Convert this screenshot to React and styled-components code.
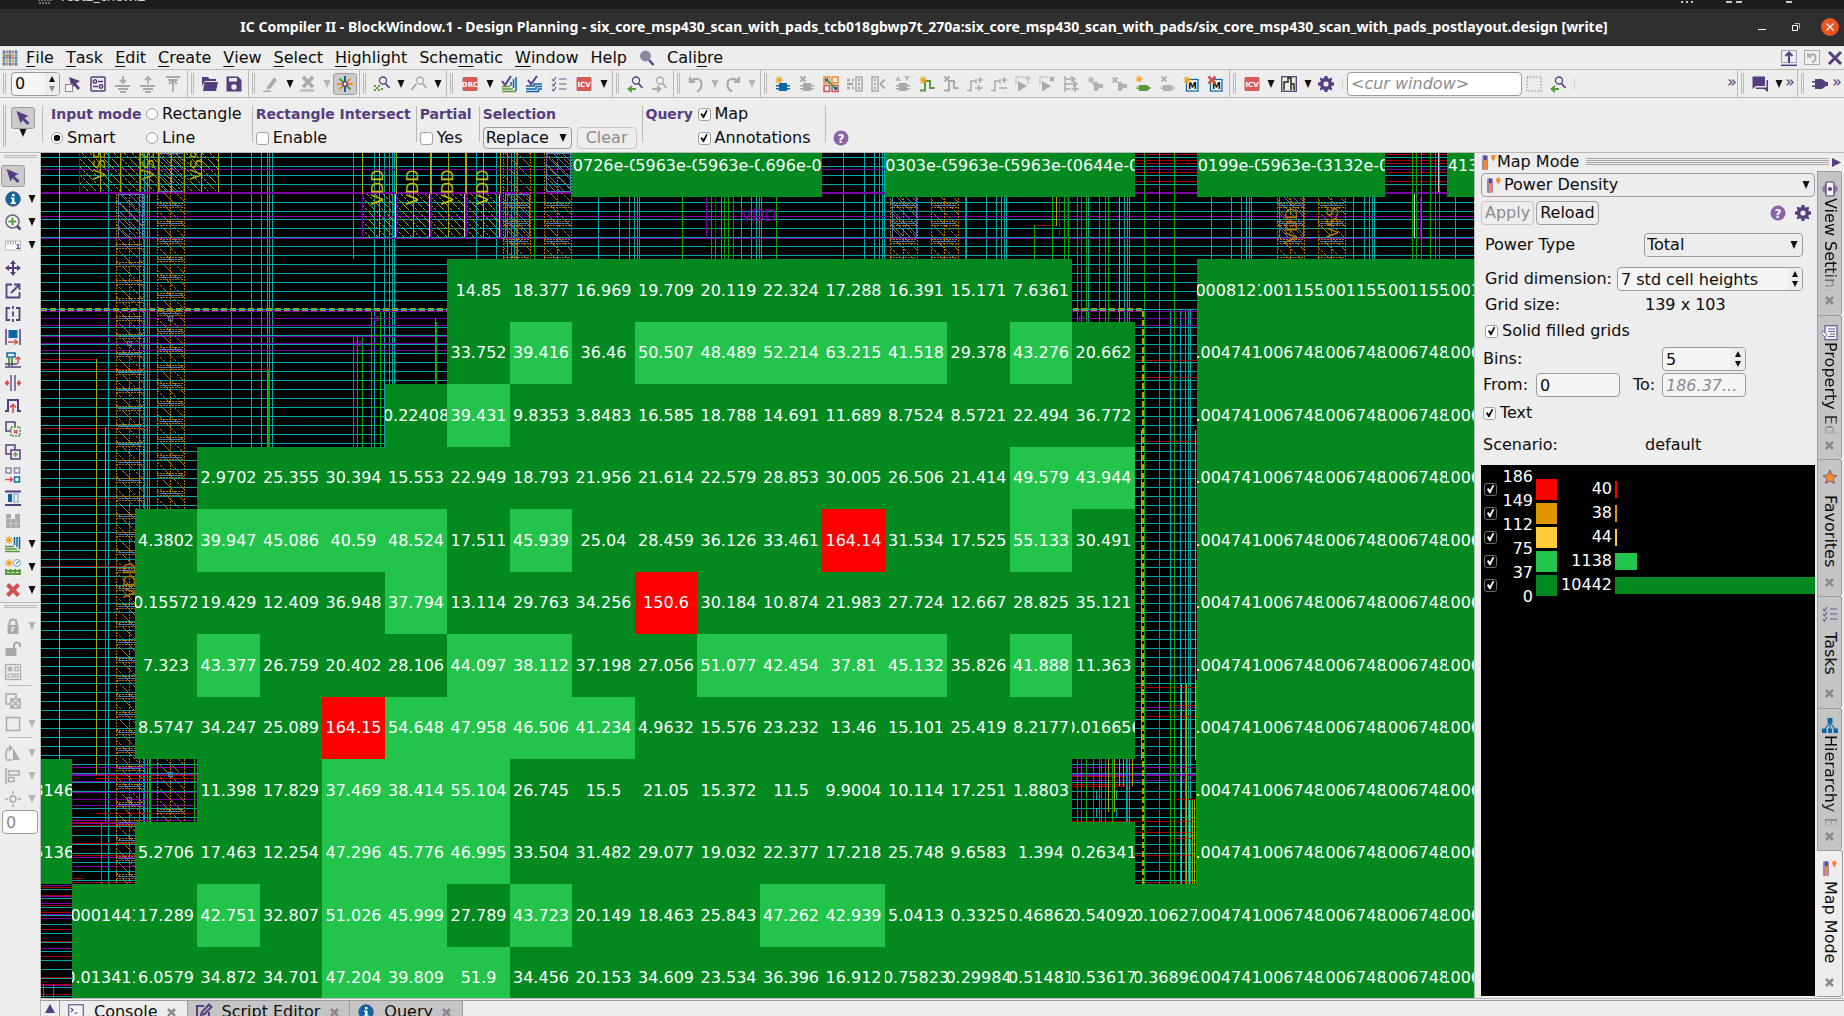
import React, { useState } from "react";
import styled, { createGlobalStyle, css } from "styled-components";

const C = {
  panel: "#ededed",
  line: "#b9b9b9",
  frame: "#9c9c9c",
  violet: "#553e80",
  blue: "#0b67a4",
  leaf: "#5a9a3a",
  orange: "#f58a2e",
  sun: "#f5a11e",
  rose: "#d2504f",
  grey: "#a9a9a9",
  text: "#0c0c0c",
  mute: "#8c8c8c",
};

const BINS = [
  { min: 149, label: "186", count: 40, color: "#ff0000" },
  { min: 112, label: "149", count: 38, color: "#e09600" },
  { min: 75, label: "112", count: 44, color: "#ffcc38" },
  { min: 37.3, label: "75", count: 1138, color: "#22c44b" },
  { min: 0, label: "37", count: 10442, color: "#028a20" },
];

const Global = createGlobalStyle`
  *, *::before, *::after { box-sizing: border-box; }
  body { margin: 0; overflow: hidden; background: ${C.panel}; }
  body, button, input, select {
    font-family: "DejaVu Sans", sans-serif;
    font-size: 16px;
    line-height: 20px;
    color: ${C.text};
  }
  button, input, select { margin: 0; }
`;

/* ---------- icons ---------- */

const Svg = styled.svg`
  display: block;
  flex: none;
  overflow: visible;
`;

const Star = ({ x = 3, y = 3, c = C.sun, r = 3 }) => (
  <g stroke={c} strokeWidth="1">
    <circle cx={x} cy={y} r={r * 0.5} fill={c} stroke="none" />
    <path
      d={`M${x} ${y - r}V${y + r}M${x - r} ${y}H${x + r}M${x - r * 0.75} ${y - r * 0.75}L${x + r * 0.75} ${y + r * 0.75}M${x + r * 0.75} ${y - r * 0.75}L${x - r * 0.75} ${y + r * 0.75}`}
    />
  </g>
);
const Cross = ({ x = 3, y = 3, r = 2.5, c = C.grey, w = 2 }) => (
  <path d={`M${x - r} ${y - r}L${x + r} ${y + r}M${x + r} ${y - r}L${x - r} ${y + r}`} stroke={c} strokeWidth={w} />
);
const gate = (c) => <path d="M4 8H12L15 10.500H16V11.500H15L12 14H4V12H1.500V11H4V10.500H1.500V9.500H4Z" fill={c} />;
const cell = (c) => (
  <path d="M4 7H12V9H15V10.500H12V12H15V13.500H12V15H4V13.500H1V12H4V10.500H1V9H4Z" fill={c} />
);
const route = (c) => <path d="M1 14.500H6V5H11V12H15.500" fill="none" stroke={c} strokeWidth="2" />;
const thinRoute = (c) => <path d="M0 14.500H4V5H9M9 2.500V7.500M13 1V7M11 4H16" fill="none" stroke={c} strokeWidth="1.500" />;
const badge = (t) => (
  <>
    <rect x="0.500" y="1" width="15" height="14" rx="1.500" fill="#d65a58" />
    <text x="8" y="11" textAnchor="middle" fontSize="7" fontWeight="700" fill="#fff" fontFamily="DejaVu Sans, sans-serif">
      {t}
    </text>
  </>
);
const glass = (c) => (
  <g fill="none" stroke={c}>
    <circle cx="8" cy="4.500" r="3.500" strokeWidth="1.300" />
    <path d="M10.500 7.500L14.500 12" strokeWidth="1.800" />
  </g>
);
const bigM = (
  <>
    <rect x="3.500" y="3.500" width="11.500" height="11.500" fill="#fff" stroke={C.blue} strokeWidth="1.300" />
    <text x="9.500" y="13" textAnchor="middle" fontSize="9" fontWeight="700" fill="#111" fontFamily="DejaVu Sans, sans-serif">
      M
    </text>
  </>
);
const bars = (c) => <path d="M0 10H15M3 13H13M5 16H11" fill="none" stroke={c} strokeWidth="2" />;
const gearPath =
  "M6.600 0H9.400L9.800 2.200L11.300 2.800L13.100 1.600L14.400 2.900L13.200 4.700L13.800 6.200L16 6.600V9.400L13.800 9.800L13.200 11.300L14.400 13.100L13.100 14.400L11.300 13.200L9.800 13.800L9.400 16H6.600L6.200 13.800L4.700 13.200L2.900 14.400L1.600 13.100L2.800 11.300L2.200 9.800L0 9.400V6.600L2.200 6.200L2.800 4.700L1.600 2.900L2.900 1.600L4.700 2.800L6.200 2.200Z";

const ICONS = {
  cursor: <path d="M1.500 1L13.500 6L9.500 8L14.500 13L12.500 15L7.500 10L5.500 13.500Z" fill={C.violet} />,
  pick: (
    <>
      <path d="M4 1L15 5L11 7.500L15 12L13 14L9 9.500L7 13Z" fill={C.violet} />
      <rect x="0.500" y="8.500" width="7" height="7" fill="#f6f6f6" stroke="#888" />
    </>
  ),
  sliders: (
    <g fill="none" stroke={C.violet} strokeWidth="1.500">
      <rect x="1" y="1" width="14" height="14" rx="1" />
      <circle cx="5" cy="5.500" r="1.700" />
      <circle cx="11" cy="10.500" r="1.700" />
      <path d="M8 5.500H13M3 10.500H8" />
    </g>
  ),
  down: (
    <>
      {bars(C.grey)}
      <path d="M8 0V6M5 4L8 7L11 4" fill="none" stroke={C.grey} strokeWidth="1.800" />
    </>
  ),
  up: (
    <>
      {bars(C.grey)}
      <path d="M8 8V1M5 4L8 1L11 4" fill="none" stroke={C.grey} strokeWidth="1.800" />
    </>
  ),
  top: <path d="M1 1H15M8 16V4M4 8L8 4L12 8M3 4H13" fill="none" stroke={C.grey} strokeWidth="1.800" />,
  folder: (
    <g fill={C.violet}>
      <path d="M0 1H6L7.500 3H14V5H3L0 10Z" />
      <path d="M2.500 6H16L14 15H1Z" />
    </g>
  ),
  save: (
    <g>
      <path d="M0.500 0.500H12L15.500 4V15.500H0.500Z" fill={C.violet} />
      <rect x="3" y="2" width="8" height="3.500" fill="#ededed" />
      <circle cx="8" cy="11" r="2.700" fill="#ededed" />
    </g>
  ),
  pencil: <path d="M4 11L11 1.500L14 4L7.500 12.500L3.500 13.500ZM0 14.500H8V16H0Z" fill={C.grey} />,
  erase: (
    <>
      <path d="M0 13H14V16H0Z" fill="#c4c4c4" />
      <Cross x={8} y={6} r={5} w={3.500} />
    </>
  ),
  burst: (
    <>
      <g strokeWidth="2" fill="none">
        <path d="M8 0V5M8 11V16" stroke={C.blue} />
        <path d="M0 8H5M11 8H16" stroke={C.orange} />
        <path d="M2.500 2.500L6 6M10 10L13.500 13.500" stroke={C.leaf} />
        <path d="M13.500 2.500L10 6M6 10L2.500 13.500" stroke={C.orange} />
      </g>
      <circle cx="8" cy="8" r="2.200" fill="#fff" stroke={C.violet} strokeWidth="1.500" />
    </>
  ),
  findSel: (
    <>
      <g transform="translate(1 0)">{glass(C.violet)}</g>
      <path
        d="M0 9h2v2h-2zM4 9h2v2h-2zM2 11h2v2h-2zM0 13h2v2h-2zM4 13h2v2h-2zM7 12h2v2h-2z"
        fill={C.leaf}
      />
    </>
  ),
  findOff: (
    <>
      <g transform="translate(1 0)">{glass(C.grey)}</g>
      <path d="M5 8L0.500 14" stroke={C.grey} strokeWidth="2" />
    </>
  ),
  drc: badge("DRC"),
  icv: badge("ICV"),
  checkAll: (
    <g fill="none" strokeWidth="1.500">
      <path d="M1 5L4 9L10 0" stroke={C.violet} strokeWidth="2" />
      <path d="M10 6V10M12.500 3V12M15 1V15" stroke={C.blue} />
      <path d="M1 10.500H9M1 13H12M1 15.500H15" stroke={C.leaf} />
    </g>
  ),
  checkRoute: (
    <g fill="none" strokeWidth="1.500">
      <path d="M2 4L5 8L11 0" stroke={C.violet} strokeWidth="2" />
      <path d="M0 10H8V8H16M0 13H10V10.500H16M0 15.500H12.500V13H16" stroke={C.blue} />
    </g>
  ),
  tasks: (
    <path
      d="M1 3L2.500 5L5 1M1 8L2.500 10L5 6M1 13L2.500 15L5 11M8 3H15.500M8 8H15.500M8 13H15.500"
      fill="none"
      stroke="#6a568f"
      strokeWidth="1.200"
    />
  ),
  prev: (
    <>
      <g transform="translate(1 0)">{glass(C.violet)}</g>
      <path d="M9 13H2M5 10L1.500 13L5 16" fill="none" stroke={C.leaf} strokeWidth="1.800" />
    </>
  ),
  next: (
    <>
      <g transform="translate(1 0)">{glass(C.grey)}</g>
      <path d="M1 13H9M6 10L9.500 13L6 16" fill="none" stroke={C.grey} strokeWidth="1.800" />
    </>
  ),
  undo: <path d="M2 1V6H7M2 6C6 1 14 2 13.500 9C13.500 12 12 14 9 15.500" fill="none" stroke={C.grey} strokeWidth="2.200" />,
  redo: <path d="M14 1V6H9M14 6C10 1 2 2 2.500 9C2.500 12 4 14 7 15.500" fill="none" stroke={C.grey} strokeWidth="2.200" />,
  newCell: <>{cell(C.blue)}<Star x={4} y={4} r={4} /></>,
  delCell: <>{cell(C.grey)}<Cross x={4} y={3} /></>,
  swap: (
    <>
      <g fill="none" strokeWidth="1.500">
        <path d="M1 1H6.500V7H1ZM9 1H15V7H9Z" stroke={C.orange} />
        <path d="M1 9.500H6.500V15.500H1ZM9 9.500H15V15.500H9Z" stroke={C.rose} />
        <path d="M5 5L12 12" stroke={C.leaf} strokeWidth="2" />
      </g>
      <path d="M2 2.500h3v3h-3zM11 11h3v3h-3z" fill={C.blue} />
    </>
  ),
  chipL: (
    <g fill="none" stroke={C.grey} strokeWidth="1.500">
      <rect x="9" y="1" width="6" height="14" />
      <path d="M0 4H3M0 8H6M0 12H3M5 4H7M5 12H7M11 4H13M11 8H13M11 12H13" strokeWidth="2.500" />
    </g>
  ),
  chipR: (
    <g fill="none" stroke={C.grey} strokeWidth="1.500">
      <rect x="1" y="1" width="6" height="14" />
      <path d="M9 8L14 3.500M9 8L14 12.500M3 4H5M3 8H5M3 12H5" strokeWidth="2" />
    </g>
  ),
  updown: (
    <>
      {cell(C.grey)}
      <path d="M0 5L3 0L6 5ZM9 0H15L12 5Z" fill="#bdbdbd" />
    </>
  ),
  newRoute: <>{route(C.leaf)}<Star x={4} y={4} r={4} /></>,
  delRoute: <>{route(C.grey)}<Cross x={4} y={3} /></>,
  addPin: <>{thinRoute(C.grey)}<path d="M8 12H16M12 9V15" stroke={C.grey} strokeWidth="1.500" /></>,
  remPin: <>{thinRoute(C.grey)}<path d="M8 12H16" stroke={C.grey} strokeWidth="1.500" /></>,
  bufUp: (
    <>
      <path d="M3 5L12 10L3 15.500Z" fill={C.grey} />
      <path d="M1 9V1H13V8M10.500 3.500L13 1L15.500 3.500" fill="none" stroke="#bdbdbd" strokeWidth="1.200" />
    </>
  ),
  bufDel: (
    <>
      <path d="M3 5L12 10L3 15.500Z" fill={C.grey} />
      <path d="M1 9V1H9" fill="none" stroke="#bdbdbd" strokeWidth="1.200" />
      <Cross x={13} y={3} r={2} />
    </>
  ),
  tree: (
    <g fill="none" stroke={C.grey} strokeWidth="1.500">
      <path d="M2 0V16M2 3H8M2 8H11M2 13H8" />
      <path d="M9 1L12 3L9 5ZM12 10V16M9 13H16M11 5.500L14 8L11 10Z" />
    </g>
  ),
  newPort: <><path d="M5 6H10L12 8H16V12H12L10 15H7V11Z" fill="#b2b2b2" /><Star x={4} y={4} r={3.5} c="#b2b2b2" /></>,
  delPort: <><path d="M7 6H10L12 8H16V12H12L10 15H7Z" fill="#b2b2b2" /><Cross x={4} y={4} c="#b2b2b2" /></>,
  newGate: <><g transform="translate(0 1)">{gate(C.leaf)}</g><Star x={4} y={3} r={3.5} /></>,
  delGate: <><g transform="translate(0 1)">{gate("#b2b2b2")}</g><Cross x={5} y={3} c="#b2b2b2" /></>,
  newM: <>{bigM}<Star x={4} y={4} r={4} /></>,
  delM: <>{bigM}<Cross x={5} y={4} r={3.5} c={C.rose} w={2.5} /></>,
  signal: (
    <>
      <rect x="0.700" y="0.700" width="14.600" height="14.600" fill="#e7f0df" stroke={C.violet} strokeWidth="1.300" />
      <path d="M3 14V6H7V2H10V14M10 8H13V14" fill="none" stroke="#222" strokeWidth="1.500" />
    </>
  ),
  gear: (
    <>
      <path d={gearPath} fill={C.violet} />
      <circle cx="8" cy="8" r="2.600" fill="#ededed" />
    </>
  ),
  marquee: <rect x="1" y="1" width="14" height="14" fill="none" stroke={C.grey} strokeWidth="1.500" strokeDasharray="1.500 1.500" />,
  chat: (
    <g fill={C.violet}>
      <path d="M0.500 0.500H13V10H4L0.500 13Z" />
      <path d="M14.500 4H16V16L12 13H4V11.500H14.500Z" />
    </g>
  ),
  plug: <path d="M3 3H10L14 6H16V10H14L10 13H3V11H0V9.500H3V6.500H0V5H3Z" fill={C.violet} />,
  help: (
    <>
      <circle cx="8" cy="8" r="7.500" fill="#8a63a8" />
      <text x="8" y="12.500" textAnchor="middle" fontSize="12" fontWeight="700" fill="#fff" fontFamily="DejaVu Sans, sans-serif">
        ?
      </text>
    </>
  ),
  info: (
    <>
      <circle cx="8" cy="8" r="7.200" fill={C.blue} stroke="#4b4c80" strokeWidth="1" />
      <path d="M6 6.500H9.500V11.500H11V13H5.500V11.500H7V8H6ZM7 3H9.500V5.200H7Z" fill="#fff" />
    </>
  ),
  zoomIn: (
    <g fill="none">
      <circle cx="7.500" cy="7.500" r="6.500" stroke="#6d628a" strokeWidth="1.500" fill="#f6f6f6" />
      <path d="M12 12L15.500 15.500" stroke={C.violet} strokeWidth="2.500" />
      <path d="M7.500 3.500V11.500M3.500 7.500H11.500" stroke={C.leaf} strokeWidth="2" />
    </g>
  ),
  ruler: (
    <>
      <rect x="0.500" y="4" width="15" height="9" fill="#fff" stroke="#bbb" />
      <path d="M3 4V8M5.500 4V7M8 4V8M10.500 4V7" stroke="#999" />
      <text x="13" y="12" textAnchor="middle" fontSize="7" fontWeight="700" fill={C.violet} fontFamily="DejaVu Sans, sans-serif">
        1
      </text>
    </>
  ),
  move: (
    <g>
      <path d="M8 3V13M3 8H13" stroke={C.violet} strokeWidth="2" />
      <path d="M8 0L11 4H5ZM8 16L5 12H11ZM0 8L4 5V11ZM16 8L12 11V5Z" fill={C.violet} />
    </g>
  ),
  resize: <path d="M7 1.500H1.500V14.500H14.500V9M6 10L14 2M9 1.500H14.500V7" fill="none" stroke={C.violet} strokeWidth="1.800" />,
  split: (
    <path d="M5 2H1.500V14H5M11 2H14.500V14H11M8 0V3M8 5.500V10.500M8 13V16" fill="none" stroke={C.violet} strokeWidth="1.800" />
  ),
  spread: (
    <>
      <path d="M1 0V16M15 0V16" stroke={C.violet} strokeWidth="1.500" />
      <rect x="3.500" y="1" width="9" height="8" fill={C.blue} />
      <path d="M3 13H12M9.500 10.500L12.500 13L9.500 15.500" fill="none" stroke={C.rose} strokeWidth="1.500" />
    </>
  ),
  stack: (
    <g fill="none" strokeWidth="1.500">
      <rect x="2" y="1" width="8" height="4" stroke={C.blue} />
      <path d="M4 6V14M7 6V14" stroke={C.leaf} strokeWidth="2" />
      <path d="M0 12H12M0 15H16" stroke={C.violet} />
      <path d="M13 12V5M10.500 7.500L13 5L15.500 7.500" stroke={C.rose} />
    </g>
  ),
  squeeze: (
    <g fill="none" strokeWidth="1.800">
      <path d="M6 0V16M10 0V16" stroke="#7a6a9e" />
      <path d="M0 8H4M3 5.500L0.800 8L3 10.500M16 8H12M13 5.500L15.200 8L13 10.500" stroke={C.rose} />
    </g>
  ),
  pulse: (
    <g fill="none" strokeWidth="2">
      <path d="M0 13H3V2H13V13H16" stroke={C.violet} />
      <path d="M8 15V7M5 9.500L8 6.500L11 9.500" stroke={C.rose} strokeWidth="1.600" />
    </g>
  ),
  unGroup: (
    <g fill="none" strokeWidth="1.500">
      <rect x="1" y="1" width="9" height="9" stroke={C.violet} />
      <rect x="6" y="6" width="9" height="9" stroke={C.leaf} strokeDasharray="2 1" fill="#ededed" />
      <path d="M9 9L12.500 12.500M12.500 9L9 12.500" stroke={C.rose} />
    </g>
  ),
  copy: (
    <g fill="none" strokeWidth="1.500">
      <rect x="1" y="1" width="9" height="9" stroke={C.violet} />
      <rect x="6" y="6" width="9" height="9" stroke={C.violet} fill="#ededed" />
      <path d="M10.500 8V13M8 10.500H13" stroke={C.leaf} />
    </g>
  ),
  arrange: (
    <g fill="none" strokeWidth="1.400">
      <rect x="1" y="1" width="5" height="5" stroke="#8d7fa8" />
      <rect x="9.500" y="1" width="5" height="5" stroke="#8d7fa8" />
      <rect x="9.500" y="10" width="5" height="5" stroke={C.blue} />
      <path d="M0 12.500H7M5 10L7.500 12.500L5 15" stroke={C.rose} />
    </g>
  ),
  distribute: (
    <>
      <path d="M0 1.500H16M0 15H16" stroke={C.violet} strokeWidth="2" />
      <rect x="3" y="4" width="4" height="8" fill={C.blue} />
      <rect x="9" y="4" width="4" height="8" fill="none" stroke="#8fb8d6" strokeWidth="1.500" />
    </>
  ),
  blocks: (
    <>
      <path d="M1 1H6V6H10V1H15V15H1Z" fill={C.grey} />
      <path d="M6 6V15M11 5V15M1 5.500H6M1 10.500H15" stroke="#d6d6d6" strokeWidth="0.700" />
    </>
  ),
  newLayers: (
    <>
      <path d="M9.500 1V9M12 1V11M14.500 1V13" stroke={C.blue} strokeWidth="1.500" />
      <path d="M0 10.500H9M0 13H12M0 15.500H15" stroke={C.leaf} strokeWidth="1.500" />
      <Star x={4} y={4} r={4} />
    </>
  ),
  newFence: (
    <>
      <path d="M1 10V16M5.500 10V16M10 10V16M14.500 10V16M0 12H16M0 15H16" stroke={C.leaf} strokeWidth="2" />
      <circle cx="12" cy="4" r="3.500" fill="#fff" stroke="#6aa0c8" />
      <path d="M11 5L14 2" stroke={C.blue} />
      <Star x={4} y={4} r={4} />
    </>
  ),
  remove: <Cross x={8} y={8} r={5.5} c={C.rose} w={4} />,
  lock: (
    <>
      <path d="M4.500 8V4.500C4.500 0.500 11.500 0.500 11.500 4.500V8" fill="none" stroke={C.grey} strokeWidth="2" />
      <rect x="2.500" y="7" width="11" height="9" rx="1" fill={C.grey} />
      <path d="M7 14V9.500H10M7 11.500H9.500" fill="none" stroke="#ededed" strokeWidth="1.200" />
    </>
  ),
  unlock: (
    <>
      <path d="M9 8V4.500C9 0.500 15 0.500 15 4.500V6" fill="none" stroke={C.grey} strokeWidth="2" />
      <rect x="0.500" y="7" width="11" height="8" rx="1" fill={C.grey} />
    </>
  ),
  floor: (
    <g fill="none" stroke={C.grey} strokeWidth="1.200">
      <rect x="0.500" y="0.500" width="15" height="15" />
      <Star x={5} y={5} r={3} c={C.grey} />
      <path d="M10 3H13V7H10ZM3 10H8V13H3ZM10 10H13V13H10Z" />
    </g>
  ),
  select2: (
    <g fill="none" stroke={C.grey} strokeWidth="1.500">
      <path d="M5 11H1V1H11V5" />
      <path d="M6 6H15V15H6ZM6 6L15 15M15 6L6 15" />
    </g>
  ),
  square: <rect x="1.500" y="1.500" width="13" height="13" fill="none" stroke={C.grey} strokeWidth="1.500" />,
  rotate: (
    <>
      <path d="M8 3L15 15H8Z" fill={C.grey} />
      <path d="M1 14V8C1 4 4 3 6 3M4 0.500L7 3L4 6M7 15H1" fill="none" stroke={C.grey} strokeWidth="1.500" />
    </>
  ),
  align: <path d="M1 0V16M3.500 3H14V7H3.500ZM3.500 9.500H9V13.500H3.500Z" fill="none" stroke={C.grey} strokeWidth="1.500" />,
  center: (
    <g fill="none" stroke={C.grey} strokeWidth="1.500">
      <circle cx="8" cy="8" r="3" />
      <path d="M8 0V3M8 13V16M0 8H3M13 8H16" />
    </g>
  ),
  thermo: (
    <>
      <rect x="1" y="1" width="6" height="15" rx="1.500" fill="#9a86b8" />
      <rect x="3" y="2" width="2.500" height="5" fill={C.violet} />
      <rect x="3" y="6" width="3" height="10" rx="1" fill={C.orange} />
      <path d="M10 3A2.300 2.300 0 0 1 14.600 3C14.600 5 12.700 5.500 12.300 8C11.900 5.500 10 5 10 3Z" fill={C.orange} />
    </>
  ),
  view: (
    <>
      <ellipse cx="8" cy="8" rx="8" ry="5" fill="#8a80a2" />
      <rect x="4" y="1" width="8" height="14" rx="1" fill="#f5f5f5" stroke={C.violet} strokeWidth="1.200" />
      <circle cx="8" cy="8" r="2" fill={C.violet} />
    </>
  ),
  property: (
    <>
      <rect x="3" y="0.700" width="12" height="14" fill="#f5f5f5" stroke="#6f5f95" strokeWidth="1.300" />
      <path d="M6 4H13M6 6.500H13M8 9H13M6 11.500H13" stroke="#6f5f95" />
      <path d="M0 6L5 9L3 12L0 9Z" fill="#fff" stroke="#6f5f95" strokeWidth="0.800" />
    </>
  ),
  star: <path d="M8 1L10 6L15 6.500L11.300 9.800L12.500 14.500L8 12L3.500 14.500L4.700 9.800L1 6.500L6 6Z" fill={C.orange} stroke="#7a5a80" />,
  hierarchy: (
    <>
      <path d="M8 4L2.500 12M8 4V12M8 4L13.500 12" stroke={C.blue} strokeWidth="1.200" />
      <path d="M5.500 0H10.500V5H5.500ZM0 10.500H4.500V15H0ZM6 10.500H10V15H6ZM11.500 10.500H16V15H11.500Z" fill={C.blue} />
    </>
  ),
  console: (
    <>
      <rect x="0.700" y="0.700" width="14.600" height="12" fill="#f5f3fa" stroke="#7a6a9e" strokeWidth="1.400" />
      <path d="M3 4L5 6L3 8M6.500 9H9.500" fill="none" stroke={C.violet} strokeWidth="1.100" />
    </>
  ),
  script: (
    <path d="M8 2H1V15H13V8M5 11L6 8L13 0.500L15.500 3L8.500 10Z" fill="none" stroke={C.violet} strokeWidth="2" />
  ),
  app: (
    <g strokeWidth="1.200">
      <path d="M2 0V16M8 0V16M14 0V16" stroke={C.blue} />
      <path d="M5 0V16M11 0V16" stroke={C.orange} />
      <path d="M0 2H16M0 8H16M0 14H16" stroke="#7a6aa8" />
      <path d="M0 5H16M0 11H16" stroke="#8cb08a" />
      <path d="M3 6H10" stroke={C.rose} />
    </g>
  ),
  search: (
    <>
      <circle cx="6.500" cy="6" r="4.700" fill="#8b8b97" stroke="#8b7fa8" strokeWidth="1.500" />
      <path d="M10 10L14.500 15" stroke={C.violet} strokeWidth="2.500" />
    </>
  ),
  undock: (
    <g fill="none" stroke={C.violet}>
      <rect x="0.500" y="0.500" width="15" height="12" stroke="#a79cc0" />
      <path d="M8 13V3M4.500 6L8 2.500L11.500 6" strokeWidth="2" />
      <path d="M0 15.300H16" strokeWidth="1.500" />
    </g>
  ),
  restore: (
    <g fill="none" stroke={C.grey}>
      <rect x="0.500" y="0.500" width="15" height="14" />
      <path d="M4 3V6.500H7.500M4 6.500C7 3 12 4 11.500 8C11.500 10 10 12 8 12" strokeWidth="1.800" />
    </g>
  ),
  close: <Cross x={8} y={8} r={6} c={C.violet} w={3} />,
};

const Icon = ({ name }) => (
  <Svg width="16" height="16" viewBox="0 0 16 16" aria-hidden="true">
    {ICONS[name]}
  </Svg>
);

const Tri = ({ color = "#111" }) => (
  <Svg width="8" height="8" viewBox="0 0 8 8" aria-hidden="true">
    <path d="M0.500 0H7.500L4 8Z" fill={color} />
  </Svg>
);

/* ---------- window frame ---------- */

const Shell = styled.div`
  display: flex;
  flex-direction: column;
  height: 100vh;
  overflow: hidden;
  background: ${C.panel};
`;

const DesktopStrip = styled.div`
  flex: none;
  height: 9px;
  padding: 0 48px 5px 38px;
  display: flex;
  align-items: flex-end;
  gap: 7px;
  overflow: hidden;
  background: #1d1d1d;
  color: #d0d0d0;
  font-family: "Noto Sans", sans-serif;
  font-size: 14px;
  line-height: 16px;
`;
const StripText = styled.span`
  flex: 1;
`;

const TitleBar = styled.header`
  flex: none;
  display: grid;
  grid-template-columns: 104px 1fr 100px;
  align-items: center;
  height: 37px;
  background: #302f30;
  border-bottom: 1px solid #1f1e1f;
`;
const Title = styled.h1`
  grid-column: 2;
  margin: 0;
  text-align: center;
  white-space: nowrap;
  color: #fff;
  font: 700 14px/20px "Noto Sans", sans-serif;
`;
const WindowButtons = styled.div`
  display: flex;
  align-items: center;
  justify-content: flex-end;
  gap: 16px;
  padding-right: 5px;
`;
const plain = css`
  display: flex;
  align-items: center;
  justify-content: center;
  padding: 0;
  border: 0;
  background: none;
`;
const WindowButton = styled.button`
  ${plain}
  width: 18px;
  height: 18px;
  border-radius: 9px;
  background: ${(p) => (p.$danger ? "#e95420" : "none")};
`;

const MenuBar = styled.nav`
  flex: none;
  display: flex;
  align-items: center;
  height: 24px;
  padding: 0 1px 0 2px;
  border-bottom: 1px solid ${C.line};
`;
const MenuItems = styled.div`
  display: flex;
  align-items: center;
  margin-left: 2px;
`;
const MenuItem = styled.button`
  ${plain}
  padding: 0 6px;
  white-space: pre;
`;
const Mnemonic = styled.span`
  text-decoration: underline;
  text-decoration-thickness: 1px;
  text-underline-offset: 3px;
`;
const MenuEnd = styled.div`
  display: flex;
  gap: 7px;
  margin-left: auto;
`;

const MENUS = [
  ["", "F", "ile"],
  ["", "T", "ask"],
  ["", "E", "dit"],
  ["", "C", "reate"],
  ["", "V", "iew"],
  ["", "S", "elect"],
  ["", "H", "ighlight"],
  ["Sche", "m", "atic"],
  ["", "W", "indow"],
  ["Help", "", ""],
];

/* ---------- tool bars ---------- */

const ToolBar = styled.div`
  flex: none;
  display: flex;
  height: 28px;
  overflow: hidden;
  border-bottom: 1px solid ${C.line};
`;
const ToolGroup = styled.div`
  flex: ${(p) => (p.$grow ? "1 1 auto" : "none")};
  display: flex;
  align-items: center;
  gap: ${(p) => (p.$gap ? "1px" : "0")};
  padding: 0 ${(p) => (p.$grow ? 0 : 2)}px 0 3px;
  border-left: ${(p) => (p.$first ? "0" : `1px solid ${C.line}`)};
`;
const Handle = styled.span`
  flex: none;
  align-self: stretch;
  width: 3px;
  margin: 3px 4px 3px 0;
  border: solid ${C.line};
  border-width: 0 1px;
`;
const ToolButton = styled.button`
  ${plain}
  flex: none;
  width: 24px;
  height: 22px;
  ${(p) =>
    p.$active &&
    css`
      background: #cbcbcb;
      border: 1px solid ${C.frame};
      border-radius: 3px;
    `}
`;
const ArrowButton = styled.button`
  ${plain}
  flex: none;
  width: 13px;
  height: 22px;
`;
const Chevron = styled.button`
  ${plain}
  width: 10px;
  color: ${C.violet};
  padding-bottom: 4px;
`;
const Rule = styled.span`
  flex: none;
  width: 1px;
  height: 12px;
  margin: 0 4px;
  background: #cfcfcf;
`;
const Spacer = styled.span`
  flex: 1;
`;

const Field = styled.span`
  display: flex;
  align-items: center;
  flex: none;
  width: ${(p) => p.$w}px;
  height: 24px;
  border: 1px solid ${C.frame};
  border-radius: 4px;
  background: ${(p) => p.$bg || "#f5f5f5"};
  overflow: hidden;
`;
const Input = styled.input`
  flex: 1;
  min-width: 0;
  width: 100%;
  height: 22px;
  padding: 0 3px;
  border: 0;
  outline: 0;
  background: none;
  color: ${(p) => (p.$mute ? C.mute : C.text)};
  text-overflow: ellipsis;
  &::placeholder {
    color: ${C.mute};
    opacity: 1;
    font-style: italic;
  }
`;
const Steps = styled.span`
  display: flex;
  flex-direction: column;
  align-items: center;
  justify-content: center;
  gap: 3px;
  width: 14px;
  height: 22px;
  background: ${C.panel};
`;
const Step = styled.button`
  ${plain}
  width: 14px;
  height: 7px;
`;

const StepIcon = ({ up, color = "#111" }) => (
  <Svg width="6" height="6" viewBox="0 0 6 6" aria-hidden="true">
    <path d={up ? "M3 0L6 6H0Z" : "M0 0H6L3 6Z"} fill={color} />
  </Svg>
);

function Spin({ id, label, w, value, lowOff }) {
  const [v, setV] = useState(value);
  return (
    <Field $w={w}>
      <Input id={id} aria-label={label} value={v} onChange={(e) => setV(e.target.value)} />
      <Steps>
        <Step aria-label="Increase">
          <StepIcon up />
        </Step>
        <Step aria-label="Decrease">
          <StepIcon color={lowOff ? "#8a8a8a" : "#111"} />
        </Step>
      </Steps>
    </Field>
  );
}

const Tool = ({ name, label, active }) => (
  <ToolButton $active={active} aria-label={label || name}>
    <Icon name={name} />
  </ToolButton>
);
const Drop = ({ off }) => (
  <ArrowButton aria-label="More">
    <Tri color={off ? "#b4b4b4" : "#111"} />
  </ArrowButton>
);

const EDIT_TOOLS = [
  "newCell", "delCell", "swap", "chipL", "chipR", "updown", "newRoute", "delRoute", "addPin", "remPin",
  "bufUp", "bufDel", "tree", "newPort", "delPort", "newGate", "delGate", "newM", "delM",
];

/* ---------- option bar ---------- */

const OptionBar = styled.div`
  flex: none;
  display: flex;
  height: 55px;
  padding: 4px 0 2px 3px;
  border-bottom: 1px solid ${C.line};
`;
const PickColumn = styled.div`
  display: flex;
  flex-direction: column;
  align-items: center;
  width: 24px;
  margin: 5px 7px 0 1px;
`;
const OptionSet = styled.fieldset`
  display: grid;
  grid-template-columns: ${(p) => p.$cols || "auto"};
  grid-template-rows: 24px 24px;
  align-items: center;
  justify-content: start;
  min-width: 0;
  margin: 0;
  padding: 0 ${(p) => p.$end || 5}px 0 4px;
  border: 0;
  position: relative;
  &::before {
    content: "";
    position: absolute;
    left: 0;
    top: 4px;
    height: 36px;
    width: 1px;
    background: ${C.line};
  }
`;
const OptionTitle = styled.span`
  padding-left: ${(p) => (p.$inset ? 5 : 0)}px;
  color: ${C.violet};
  font-size: 14px;
  font-weight: 700;
  white-space: nowrap;
`;
const Choice = styled.label`
  display: flex;
  align-items: center;
  gap: 4px;
  padding-left: ${(p) => (p.$inset ? 5 : 0)}px;
  white-space: nowrap;
`;
const Radio = styled.input.attrs({ type: "radio" })`
  appearance: none;
  flex: none;
  width: 12px;
  height: 12px;
  border: 1px solid #a2a2a2;
  border-radius: 50%;
  background: #fff;
  &:checked {
    background: radial-gradient(circle, #111 0 3px, #fff 3px);
  }
`;
const Check = styled.input.attrs({ type: "checkbox" })`
  appearance: none;
  flex: none;
  width: 13px;
  height: 13px;
  border: 1px solid ${(p) => (p.$dark ? "#6c6c6c" : "#a2a2a2")};
  border-radius: 3px;
  background: ${(p) => (p.$dark ? "#000" : "#fff")};
  &::after {
    content: "";
    display: block;
    height: 11px;
  }
  &:checked::after {
    background: ${(p) => (p.$dark ? "#fff" : "#111")};
    clip-path: polygon(18% 52%, 30% 42%, 44% 58%, 72% 12%, 84% 18%, 50% 88%, 40% 88%);
  }
`;
const ButtonRow = styled.div`
  display: flex;
  gap: 5px;
`;
const PushButton = styled.button`
  height: ${(p) => (p.$small ? 22 : 24)}px;
  padding: 0 ${(p) => (p.$wide ? 8 : 3)}px;
  border: 1px solid ${C.frame};
  border-radius: 4px;
  background: ${C.panel};
  &:disabled {
    color: ${C.mute};
    border-color: #c6c6c6;
  }
`;
const SelectBox = styled.span`
  display: flex;
  align-items: center;
  width: ${(p) => (p.$w ? `${p.$w}px` : "auto")};
  height: ${(p) => (p.$small ? 22 : 24)}px;
  padding: 0 4px 0 2px;
  border: 1px solid ${C.frame};
  border-radius: 4px;
  background: ${C.panel};
`;
const Select = styled.select`
  appearance: none;
  flex: 1;
  min-width: 0;
  height: 20px;
  padding: 0;
  border: 0;
  outline: 0;
  background: none;
`;

/* ---------- body ---------- */

const Body = styled.div`
  flex: 1;
  min-height: 0;
  display: flex;
`;
const SideBar = styled.aside`
  flex: none;
  width: 41px;
  padding-top: 2px;
  border-right: 1px solid ${C.line};
`;
const SideHandle = styled.div`
  height: 3px;
  margin: 0 3px 6px 4px;
  border: solid ${C.line};
  border-width: 1px 0;
`;
const SideGroup = styled.div`
  padding-bottom: ${(p) => (p.$end ? 1 : 0)}px;
  margin-bottom: ${(p) => (p.$end ? 2 : 0)}px;
  border-bottom: ${(p) => (p.$end ? `1px solid ${C.line}` : "0")};
`;
const SideRow = styled.div`
  display: flex;
  align-items: center;
  height: 23px;
  padding-left: 1px;
`;
const SideRule = styled.div`
  height: 1px;
  margin: 2px 8px 3px;
  background: ${C.line};
`;
const SideInput = styled.div`
  padding: 0 2px;
`;

const SIDE_TOP = [
  ["cursor", "active"],
  ["info", "drop"],
  ["zoomIn", "drop"],
  ["ruler", "drop"],
  ["move"],
  ["resize"],
  ["split"],
  ["spread"],
  ["stack"],
  ["squeeze"],
  ["pulse"],
  ["unGroup"],
  ["copy"],
  ["arrange"],
  ["distribute"],
  ["blocks"],
  ["newLayers", "drop"],
  ["newFence", "drop"],
  ["remove", "drop"],
];

const Work = styled.div`
  flex: 1;
  min-width: 0;
  display: flex;
  flex-direction: column;
`;
const WorkRow = styled.div`
  flex: 1;
  min-height: 0;
  display: flex;
  border-bottom: 1px solid ${C.line};
`;
const Canvas = styled.main`
  position: relative;
  flex: 1;
  min-width: 0;
  overflow: hidden;
  background: #000;
`;
const Wires = styled.svg`
  position: absolute;
  inset: 0;
  width: 100%;
  height: 100%;
`;
const HeatMap = styled.div`
  position: relative;
  display: grid;
  grid-template-columns: repeat(12, 62px 63px);
  grid-template-rows: repeat(7, 63px 62px);
  width: max-content;
  margin: -19px 0 0 -31px;
`;
const HeatCell = styled.div`
  display: flex;
  align-items: center;
  justify-content: center;
  overflow: hidden;
  white-space: nowrap;
  color: #fff;
  background: ${(p) => p.$color};
`;

/* each run: first column index, then the values from left to right */
const FLOW = "0.0047417 0.0067485 0.0067485 0.0067485 0.0067485";
const HEAT = [
  [[9, "1.0726e-05 4.5963e-05 4.5963e-05 2.696e-05"], [14, "1.0303e-05 4.5963e-05 4.5963e-05 2.0644e-05"], [19, "1.0199e-05 4.5963e-05 3.3132e-05"], [23, "1.4131e-05"]],
  [],
  [[7, "14.85 18.377 16.969 19.709 20.119 22.324 17.288 16.391 15.171 7.6361"], [19, "0.00081217 0.0011553 0.0011553 0.0011553 0.0011553"]],
  [[7, "33.752 39.416 36.46 50.507 48.489 52.214 63.215 41.518 29.378 43.276 20.662"], [19, FLOW]],
  [[6, "0.22408 39.431 9.8353 3.8483 16.585 18.788 14.691 11.689 8.7524 8.5721 22.494 36.772"], [19, FLOW]],
  [[3, "2.9702 25.355 30.394 15.553 22.949 18.793 21.956 21.614 22.579 28.853 30.005 26.506 21.414 49.579 43.944"], [19, FLOW]],
  [[2, "4.3802 39.947 45.086 40.59 48.524 17.511 45.939 25.04 28.459 36.126 33.461 164.14 31.534 17.525 55.133 30.491"], [19, FLOW]],
  [[2, "0.15572 19.429 12.409 36.948 37.794 13.114 29.763 34.256 150.6 30.184 10.874 21.983 27.724 12.667 28.825 35.121"], [19, FLOW]],
  [[2, "7.323 43.377 26.759 20.402 28.106 44.097 38.112 37.198 27.056 51.077 42.454 37.81 45.132 35.826 41.888 11.363"], [19, FLOW]],
  [[2, "8.5747 34.247 25.089 164.15 54.648 47.958 46.506 41.234 4.9632 15.576 23.232 13.46 15.101 25.419 8.2177 0.016656"], [19, FLOW]],
  [[0, "0.0081465"], [3, "11.398 17.829 37.469 38.414 55.104 26.745 15.5 21.05 15.372 11.5 9.9004 10.114 17.251 1.8803"], [19, FLOW]],
  [[0, "0.0051365"], [2, "5.2706 17.463 12.254 47.296 45.776 46.995 33.504 31.482 29.077 19.032 22.377 17.218 25.748 9.6583 1.394 0.26341"], [19, FLOW]],
  [[1, "0.00014413 17.289 42.751 32.807 51.026 45.999 27.789 43.723 20.149 18.463 25.843 47.262 42.939 5.0413 0.3325 0.46862 0.54092 0.10627"], [19, FLOW]],
  [[1, "0.013411 6.0579 34.872 34.701 47.204 39.809 51.9 34.456 20.153 34.609 23.534 36.396 16.912 0.75823 0.29984 0.51481 0.53617 0.36896"], [19, FLOW]],
];

const CELLS = HEAT.flatMap((runs, row) =>
  runs.flatMap(([start, text]) => text.split(" ").map((value, i) => ({ row: row + 1, col: start + i + 1, value })))
);
const binColor = (v) => BINS.find((b) => Number(v) >= b.min).color;

/* ---------- routing layers under the map ---------- */

const W = { cyan: "#00a8a8", purple: "#7d00a8", yellow: "#a8a800", green: "#00a800", red: "#a80000", gold: "#ad7500", steel: "#4a7ab5" };

const hl = (color, x1, x2, ys, t = 1) => ys.map((y) => <rect key={`${color}${x1}h${y}`} x={x1} y={y} width={x2 - x1} height={t} fill={color} />);
const vl = (color, y1, y2, xs, t = 1) => xs.map((x) => <rect key={`${color}${y1}v${x}`} x={x} y={y1} width={t} height={y2 - y1} fill={color} />);

const ROWS = Array.from({ length: 95 }, (_, i) => Math.round(157 + i * 8.923));
const steps = (a, b, d) => Array.from({ length: Math.max(0, Math.ceil((b - a) / d)) }, (_, i) => a + i * d);

/* 45 degree strokes that fill a box, clipped to it */
const hatch = (x, y, w, h, d) => {
  let path = "";
  for (let s = -h; s < w; s += d) {
    const a = Math.max(0, s);
    const b = Math.min(w, s + h);
    path += `M${x + a} ${y + a - s}L${x + b} ${y + b - s}`;
  }
  return path;
};

const Strap = ({ x, y1, y2, w = 27 }) => (
  <g fill="none" stroke={W.gold}>
    <path d={hatch(x, y1, w, y2 - y1, 12)} strokeDasharray="3 1" />
    <path d={`M${x + 0.5} ${y1}V${y2}M${x + w + 0.5} ${y1}V${y2}M${x + 13.5} ${y1}V${y2}`} strokeDasharray="2 1" />
    {steps(y1 + 50, y2, 18).map((y) => (
      <g key={y}>
        <path d={`M${x} ${y + 0.5}H${x + w}M${x} ${y + 4.5}H${x + w}`} strokeDasharray="2 1" />
        <rect x={x + 2} y={y + 2} width={w - 4} height="1" fill={W.steel} stroke="none" />
      </g>
    ))}
  </g>
);
const SteelBox = ({ x, y, w, h }) => (
  <g fill="none" stroke={W.steel}>
    <rect x={x + 0.5} y={y + 0.5} width={w} height={h} />
    <path d={hatch(x, y, w, h, 9)} />
  </g>
);
const YellowBox = ({ x, w, y, h }) => <path d={hatch(x, y, w, h, 8)} fill="none" stroke={W.yellow} strokeDasharray="3 1" />;
const NetName = ({ x, y, color, children, flat }) => (
  <text
    x={x}
    y={y}
    fill={color}
    fontFamily="DejaVu Sans, sans-serif"
    fontSize="16"
    transform={flat ? undefined : `rotate(-90 ${x} ${y})`}
  >
    {children}
  </text>
);

function Routing() {
  return (
    <Wires shapeRendering="crispEdges" aria-hidden="true">
      <g transform="translate(-41 -153)">
        {hl(W.cyan, 41, 1474, ROWS)}
        {vl(W.cyan, 153, 998, [108])}
        {vl(W.cyan, 153, 822, [139, 144, 147, 149])}
        {vl(W.cyan, 153, 447, [231, 251, 261, 267, 269, 272, 374, 384, 389, 392, 394])}
        {vl(W.cyan, 153, 259, [353, 476, 496, 507, 511, 514, 517, 598, 619, 629, 634, 637, 639, 721, 741, 751, 756, 759, 761, 843, 864, 874, 879, 882, 884, 966, 986, 996, 1001, 1004, 1006, 1211, 1231, 1241, 1246, 1249, 1251, 1353, 1364, 1369, 1372, 1374, 1455])}
        {vl(W.cyan, 197, 322, [1088, 1124, 1127, 1129])}
        {vl(W.cyan, 310, 884, [1170, 1180, 1185, 1188, 1190])}

        {hl(W.purple, 41, 1474, [192], 2)}
        {hl(W.purple, 41, 1474, [169, 216, 238, 311])}
        {hl(W.purple, 41, 447, [318, 325, 336, 343, 350])}
        {hl(W.purple, 1072, 1197, [318, 325])}
        {hl(W.purple, 72, 197, [767, 781, 792, 799, 805, 820])}
        {hl(W.purple, 72, 197, [774], 2)}
        {hl(W.purple, 72, 135, [823, 857, 866])}
        {hl(W.purple, 41, 72, [885, 896, 903, 914, 918, 948, 985])}
        {hl(W.purple, 1072, 1197, [707, 767, 780])}
        {hl(W.purple, 1072, 1197, [774], 2)}

        {hl(W.red, 41, 97, [359])}
        {hl(W.red, 41, 269, [369])}
        {hl(W.red, 41, 147, [428, 498])}
        {hl(W.red, 41, 135, [566])}
        {hl(W.red, 96, 197, [775, 778, 813])}
        {hl(W.red, 72, 135, [822, 825, 843, 855, 882])}
        {hl(W.red, 72, 83, [878])}
        {hl(W.red, 41, 72, [887, 895, 905, 912, 929, 941, 956, 977, 984, 994])}
        {hl(W.red, 1135, 1197, [154, 160, 163, 172, 181, 360, 377, 441, 687, 716, 821, 832, 855, 882])}
        {hl(W.red, 1385, 1447, [154, 160, 163, 172, 181])}
        {hl(W.red, 1072, 1125, [776, 784, 786])}
        {hl(W.red, 1072, 1135, [821])}
        {hl(W.red, 1034, 1057, [225])}
        {hl(W.red, 1170, 1197, [705, 799, 838])}

        {vl(W.yellow, 153, 759, [59])}
        {vl(W.yellow, 359, 775, [96])}
        {vl(W.yellow, 427, 498, [105])}
        {vl(W.yellow, 197, 322, [1119])}
        {vl(W.yellow, 197, 226, [1056])}
        {vl(W.yellow, 430, 760, [1141, 1195])}
        {vl(W.yellow, 684, 884, [1181, 1186])}
        {vl(W.yellow, 800, 884, [1189, 1192, 1194])}
        {vl(W.yellow, 759, 812, [1108, 1114])}
        {vl(W.yellow, 759, 786, [1119, 1123, 1132])}

        {vl(W.green, 498, 822, [105])}
        {vl(W.green, 822, 884, [101])}
        {vl(W.green, 759, 822, [150, 194])}
        {vl(W.green, 370, 447, [268], 2)}
        {vl(W.green, 337, 447, [353, 357, 362])}
        {vl(W.green, 312, 447, [371, 380])}
        {vl(W.cyan, 318, 384, [435])}
        {vl(W.green, 322, 384, [436])}
        {hl(W.green, 371, 381, ROWS.filter((y) => y > 312 && y < 447))}
        {vl(W.green, 153, 259, [534, 682, 711, 715, 724, 728, 733, 776, 965, 1052, 1064, 1068, 1412, 1416, 1421, 1430, 1435, 1439])}
        {vl(W.green, 225, 259, [1034])}
        {hl(W.green, 706, 716, [202, 228, 246])}
        {hl(W.green, 724, 734, [202, 228, 255])}
        {vl(W.green, 197, 322, [1077, 1081, 1086, 1099, 1105, 1108])}
        {vl(W.green, 153, 884, [1144, 1159, 1174])}
        {vl(W.green, 680, 884, [1170, 1196])}
        {vl(W.green, 759, 822, [1077, 1081, 1086, 1093, 1099, 1101, 1105, 1112, 1127])}
        {vl(W.cyan, 759, 822, [1126, 1129])}
        {vl(W.cyan, 790, 800, [1096, 1116])}
        {vl(W.cyan, 808, 818, [1096, 1116])}
        {vl(W.purple, 197, 238, [706, 715, 1059, 1067, 1413, 1420])}
        {vl("#cfcfcf", 194, 238, [1414])}
        {vl("#cfcfcf", 153, 192, [1438])}
        {vl(W.green, 984, 998, [43, 53])}

        <path d="M41 309.500H447M1073 309.500H1142" stroke={W.yellow} strokeWidth="3" strokeDasharray="6 3" />
        <path d="M41 309.500H1197" stroke={W.cyan} strokeWidth="1" />
        <path d="M1143 311V884" stroke={W.yellow} strokeWidth="2" strokeDasharray="6 3" />

        <Strap x={116} y1={194} y2={884} />
        <Strap x={157} y1={153} y2={522} />
        <Strap x={157} y1={759} y2={822} />
        {[503, 890, 1277].map((x) => (
          <g key={x}>
            <Strap x={x} y1={153} y2={259} />
            <Strap x={x + 41} y1={153} y2={259} />
            <SteelBox x={x + 2} y={194} w={24} h={43} />
          </g>
        ))}
        <SteelBox x={118} y={194} w={24} h={43} />
        <SteelBox x={159} y={153} w={24} h={38} />
        <SteelBox x={546} y={153} w={24} h={38} />

        {[[80, 40], [122, 36], [158, 26], [184, 34]].map(([x, w]) => (
          <g key={x}>
            <YellowBox x={x} y={153} w={w} h={38} />
            {vl(W.purple, 153, 192, [x - 1])}
            {vl(W.yellow, 153, 192, [x + w, x + Math.round(w / 2)])}
          </g>
        ))}
        {[362, 396, 431, 466].map((x) => (
          <g key={x}>
            <YellowBox x={x} y={194} w={33} h={43} />
            {vl(W.yellow, 153, 237, [x + 17])}
            {vl(W.yellow, 153, 194, [x, x + 34])}
            {vl(W.purple, 194, 238, [x, x + 34])}
            {vl("#cfcfcf", 194, 237, [x + 33])}
          </g>
        ))}
        {[383, 418, 453, 488].map((x) => (
          <NetName key={x} x={x} y={205} color="#c2c200">VDD</NetName>
        ))}
        <NetName x={105} y={180} color={W.yellow}>VSS</NetName>
        <NetName x={154} y={180} color={W.yellow}>VSS</NetName>
        <NetName x={202} y={180} color={W.yellow}>VSS</NetName>
        <NetName x={741} y={221} color={W.purple} flat>VDD</NetName>
        <NetName x={135} y={598} color={W.gold}>VDD</NetName>
        <NetName x={1297} y={243} color={W.gold}>VDD</NetName>
        <NetName x={1338} y={238} color={W.gold}>VSS</NetName>
        {[[170, 318], [129, 343], [170, 774], [129, 799]].map(([x, y]) => (
          <rect key={`${x}-${y}`} x={x - 2} y={y - 2} width="4" height="4" fill="none" stroke={W.steel} />
        ))}
        {[[376, 318], [358, 343], [1081, 318], [1081, 774]].map(([x, y]) => (
          <rect key={`${x}-${y}`} x={x - 2} y={y - 2} width="4" height="4" fill="none" stroke={W.purple} />
        ))}
      </g>
    </Wires>
  );
}

/* ---------- map panel ---------- */

const Side = styled.aside`
  flex: none;
  display: flex;
  width: 370px;
  border-left: 1px solid ${C.line};
`;
const Panel = styled.section`
  flex: 1;
  min-width: 0;
  display: flex;
  flex-direction: column;
  padding: 0 2px 2px 6px;
`;
const PanelHead = styled.div`
  display: flex;
  align-items: center;
  height: 18px;
  margin-right: -27px;
`;
const PanelName = styled.h2`
  margin: 0 7px 0 0;
  font-size: 16px;
  font-weight: 400;
`;
const Grip = styled.span`
  flex: 1;
  height: 8px;
  background: repeating-linear-gradient(#a8a8a8 0 1px, transparent 1px 2px);
`;
const ModeBox = styled(SelectBox)`
  margin-top: 2px;
  padding: 0 4px;
  gap: 2px;
`;
const Actions = styled.div`
  display: flex;
  align-items: center;
  gap: 2px;
  margin-top: 4px;
`;
const ActionIcons = styled.span`
  display: flex;
  gap: 1px;
  margin-left: auto;
`;
const Form = styled.div`
  display: flex;
  flex-direction: column;
  padding-right: 12px;
`;
const FormRow = styled.div`
  display: grid;
  grid-template-columns: ${(p) => p.$cols || "160px 1fr"};
  align-items: center;
  min-height: 24px;
  margin-top: ${(p) => p.$top || 2}px;
  padding-left: ${(p) => (p.$flush ? 2 : 4)}px;
  white-space: nowrap;
`;
const Legend = styled.div`
  flex: 1;
  margin-top: 8px;
  padding-top: 12px;
  background: #000;
  color: #fff;
  overflow: hidden;
`;
const LegendRow = styled.div`
  display: grid;
  grid-template-columns: 13px 33px 21px 52px 1fr;
  column-gap: 3px;
  align-items: center;
  height: 24px;
  padding-left: 3px;
`;
const Bound = styled.span`
  align-self: start;
  margin-top: -10px;
  text-align: right;
`;
const LastBound = styled(Bound)`
  display: block;
  width: 52px;
`;
const Swatch = styled.span`
  height: 21px;
  background: ${(p) => p.$color};
`;
const Count = styled.span`
  text-align: right;
`;
const Track = styled.span`
  height: 17px;
`;
const Bar = styled.span`
  display: block;
  height: 17px;
  min-width: 2px;
  background: ${(p) => p.$color};
`;

const TabRail = styled.div`
  flex: none;
  width: 27px;
  padding-top: 18px;
  padding-bottom: 1px;
  display: flex;
  flex-direction: column;
`;
const SideTab = styled.div`
  flex: ${(p) => p.$size} ${(p) => p.$size} 0;
  min-height: 0;
  display: flex;
  flex-direction: column;
  align-items: center;
  width: ${(p) => (p.$active ? 26 : 25)}px;
  padding: 9px 0 7px;
  border: 1px solid ${C.frame};
  border-left-width: ${(p) => (p.$active ? 0 : 1)}px;
  border-bottom-width: ${(p) => (p.$active ? 1 : 0)}px;
  border-radius: 0 3px 3px 0;
  background: ${(p) => (p.$active ? C.panel : "#c4c4c4")};
`;
const SideTabText = styled.button`
  ${plain}
  justify-content: flex-start;
  flex: 1;
  min-height: 0;
  width: 22px;
  margin: ${(p) => p.$lead}px 0 2px;
  overflow: hidden;
  writing-mode: vertical-rl;
  white-space: nowrap;
  mask-image: ${(p) => (p.$fade ? "linear-gradient(#000 75%, transparent)" : "none")};
`;
const CloseButton = styled.button`
  ${plain}
  flex: none;
  width: 14px;
  height: 14px;
`;
const CloseMark = () => (
  <Svg width="9" height="9" viewBox="0 0 9 9" aria-hidden="true">
    <path d="M1 1L8 8M8 1L1 8" stroke="#8a8a8a" strokeWidth="2.500" />
  </Svg>
);

const SIDE_TABS = [
  { name: "View Settings", icon: "view", size: 145, lead: 1, fade: true },
  { name: "Property Editor", icon: "property", size: 146, lead: 1, fade: true },
  { name: "Favorites", icon: "star", size: 137, lead: 10 },
  { name: "Tasks", icon: "tasks", size: 108, lead: 10 },
  { name: "Hierarchy Browser", icon: "hierarchy", size: 144, lead: 1, fade: true },
  { name: "Map Mode", icon: "thermo", size: 147, lead: 5, active: true },
];

/* ---------- bottom dock ---------- */

const Dock = styled.footer`
  flex: none;
  display: flex;
  align-items: flex-start;
  height: 16px;
  overflow: hidden;
  margin-top: 1px;
  border-top: 1px solid ${C.frame};
`;
const DockUp = styled.button`
  ${plain}
  width: 19px;
  height: 22px;
  padding-bottom: 8px;
  border-right: 1px solid ${C.frame};
`;
const DockTab = styled.div`
  display: flex;
  align-items: center;
  gap: 7px;
  height: 22px;
  padding: 0 8px;
  border-right: 1px solid ${C.frame};
  background: ${(p) => (p.$active ? C.panel : "#c4c4c4")};
`;
const DockName = styled.button`
  ${plain}
  gap: 10px;
`;

const Label = styled.label``;

export default function App() {
  const [mode, setMode] = useState("smart");
  const max = 10442;
  return (
    <Shell>
      <Global />
      <DesktopStrip>
        <Svg width="14" height="5" viewBox="0 0 14 5" aria-hidden="true">
          <path d="M0 1H14M1 4H13" stroke="#c8c8c8" strokeDasharray="2 1" />
        </Svg>
        <StripText>Test2_chew:2</StripText>
        <Svg width="116" height="3" viewBox="0 0 116 3" aria-hidden="true">
          <path d="M2 0V2M7 0V2M12 0V2M46 1H52M56 1H62M106 1H112" stroke="#c8c8c8" strokeWidth="2" />
        </Svg>
      </DesktopStrip>

      <TitleBar>
        <Title>
          IC Compiler II - BlockWindow.1 - Design Planning - six_core_msp430_scan_with_pads_tcb018gbwp7t_270a:six_core_msp430_scan_with_pads/six_core_msp430_scan_with_pads_postlayout.design [write]
        </Title>
        <WindowButtons>
          <WindowButton aria-label="Minimize">
            <Svg width="8" height="8" viewBox="0 0 8 8"><path d="M0 6.500H8" stroke="#fff" strokeWidth="1" /></Svg>
          </WindowButton>
          <WindowButton aria-label="Restore">
            <Svg width="8" height="8" viewBox="0 0 8 8" fill="none">
              <path d="M0.500 2.500H5.500V7.500H0.500Z" stroke="#fff" />
              <path d="M2.500 0.500H7.500V5.500" stroke="#bbb" />
            </Svg>
          </WindowButton>
          <WindowButton $danger aria-label="Close">
            <Svg width="8" height="8" viewBox="0 0 8 8"><path d="M0.500 0.500L7.500 7.500M7.500 0.500L0.500 7.500" stroke="#fff" strokeWidth="1.300" /></Svg>
          </WindowButton>
        </WindowButtons>
      </TitleBar>

      <MenuBar>
        <Icon name="app" />
        <MenuItems>
          {MENUS.map(([a, m, b]) => (
            <MenuItem key={a + m + b}>
              {a}
              {m && <Mnemonic>{m}</Mnemonic>}
              {b}
            </MenuItem>
          ))}
          <MenuItem aria-label="Search"><Icon name="search" /></MenuItem>
          <MenuItem>Cali<Mnemonic>b</Mnemonic>re</MenuItem>
        </MenuItems>
        <MenuEnd>
          <Icon name="undock" />
          <Icon name="restore" />
          <Icon name="close" />
        </MenuEnd>
      </MenuBar>

      <ToolBar>
        <ToolGroup $first $gap>
          <Handle />
          <Spin label="Level" w={49} value="0" lowOff />
          <Tool name="pick" />
          <Tool name="sliders" />
          <Tool name="down" />
          <Tool name="up" />
          <Tool name="top" />
        </ToolGroup>
        <ToolGroup>
          <Handle />
          <Tool name="folder" label="Open" />
          <Tool name="save" label="Save" />
        </ToolGroup>
        <ToolGroup>
          <Handle />
          <Tool name="pencil" />
          <Drop />
          <Tool name="erase" />
          <Drop off />
          <Tool name="burst" active />
        </ToolGroup>
        <ToolGroup>
          <Handle />
          <Tool name="findSel" />
          <Drop />
          <Tool name="findOff" />
          <Drop />
        </ToolGroup>
        <ToolGroup $gap>
          <Handle />
          <Tool name="drc" />
          <Drop />
          <Tool name="checkAll" />
          <Tool name="checkRoute" />
          <Tool name="tasks" />
          <Tool name="icv" />
          <Drop />
        </ToolGroup>
        <ToolGroup>
          <Handle />
          <Tool name="prev" />
          <Tool name="next" />
        </ToolGroup>
        <ToolGroup>
          <Handle />
          <Tool name="undo" />
          <Drop off />
          <Tool name="redo" />
          <Drop off />
        </ToolGroup>
        <ToolGroup>
          <Handle />
          {EDIT_TOOLS.map((n) => (
            <Tool key={n} name={n} />
          ))}
        </ToolGroup>
        <ToolGroup $grow>
          <Handle />
          <Tool name="icv" />
          <Drop />
          <Tool name="signal" />
          <Drop />
          <Tool name="gear" label="Settings" />
          <Rule />
          <Field $w={175} $bg="#fff">
            <Input aria-label="Window" placeholder="<cur window>" />
          </Field>
          <Tool name="marquee" />
          <Tool name="prev" />
          <Rule />
          <Spacer />
          <Chevron>»</Chevron>
        </ToolGroup>
        <ToolGroup>
          <Handle />
          <Tool name="chat" />
          <Drop />
          <Chevron>»</Chevron>
        </ToolGroup>
        <ToolGroup>
          <Handle />
          <Tool name="plug" />
          <Chevron>»</Chevron>
        </ToolGroup>
      </ToolBar>

      <OptionBar>
        <Handle />
        <PickColumn>
          <Tool name="cursor" active />
          <Tri />
        </PickColumn>
        <OptionSet $cols="100px auto" $end={10}>
          <OptionTitle $inset>Input mode</OptionTitle>
          <Choice>
            <Radio name="mode" checked={mode === "rect"} onChange={() => setMode("rect")} />
            Rectangle
          </Choice>
          <Choice $inset>
            <Radio name="mode" checked={mode === "smart"} onChange={() => setMode("smart")} />
            Smart
          </Choice>
          <Choice>
            <Radio name="mode" checked={mode === "line"} onChange={() => setMode("line")} />
            Line
          </Choice>
        </OptionSet>
        <OptionSet>
          <OptionTitle>Rectangle Intersect</OptionTitle>
          <Choice><Check />Enable</Choice>
        </OptionSet>
        <OptionSet $end={7}>
          <OptionTitle>Partial</OptionTitle>
          <Choice><Check />Yes</Choice>
        </OptionSet>
        <OptionSet>
          <OptionTitle>Selection</OptionTitle>
          <ButtonRow>
            <SelectBox $w={89} $small>
              <Select aria-label="Selection" defaultValue="Replace">
                <option>Replace</option>
                <option>Add</option>
              </Select>
              <Tri />
            </SelectBox>
            <PushButton $small $wide disabled>Clear</PushButton>
          </ButtonRow>
        </OptionSet>
        <OptionSet $cols="52px auto" $end={14}>
          <OptionTitle>Query</OptionTitle>
          <Choice><Check defaultChecked />Map</Choice>
          <span />
          <Choice><Check defaultChecked />Annotations</Choice>
        </OptionSet>
        <OptionSet>
          <span />
          <ToolButton aria-label="Help"><Icon name="help" /></ToolButton>
        </OptionSet>
      </OptionBar>

      <Body>
        <SideBar>
          <SideHandle />
          <SideGroup $end>
            {SIDE_TOP.map(([name, kind]) => (
              <SideRow key={name}>
                <Tool name={name} active={kind === "active"} />
                {kind === "drop" && <Drop />}
              </SideRow>
            ))}
          </SideGroup>
          <SideHandle />
          <SideGroup>
            <SideRow><Tool name="lock" /><Drop off /></SideRow>
            <SideRow><Tool name="unlock" /></SideRow>
            <SideRow><Tool name="floor" /></SideRow>
            <SideRule />
            <SideRow><Tool name="select2" /></SideRow>
            <SideRow><Tool name="square" /><Drop off /></SideRow>
            <SideRule />
            <SideRow><Tool name="rotate" /><Drop off /></SideRow>
            <SideRow><Tool name="align" /><Drop off /></SideRow>
            <SideRow><Tool name="center" /><Drop off /></SideRow>
          </SideGroup>
          <SideInput>
            <Field $w={36} $bg="#fff">
              <Input aria-label="Offset" defaultValue="0" $mute />
            </Field>
          </SideInput>
        </SideBar>

        <Work>
          <WorkRow>
            <Canvas>
              <Routing />
              <HeatMap>
                {CELLS.map((c) => (
                  <HeatCell key={`${c.row}-${c.col}`} $color={binColor(c.value)} style={{ gridArea: `${c.row} / ${c.col}` }}>
                    {c.value}
                  </HeatCell>
                ))}
              </HeatMap>
            </Canvas>

            <Side>
              <Panel>
                <PanelHead>
                  <Icon name="thermo" />
                  <PanelName>Map Mode</PanelName>
                  <Grip />
                  <Svg width="13" height="9" viewBox="0 0 13 9" aria-hidden="true">
                    <path d="M3 0L12 4.500L3 9Z" fill={C.violet} />
                  </Svg>
                </PanelHead>
                <ModeBox>
                  <Icon name="thermo" />
                  <Select aria-label="Map mode" defaultValue="Power Density">
                    <option>Power Density</option>
                  </Select>
                  <Tri />
                </ModeBox>
                <Actions>
                  <PushButton disabled>Apply</PushButton>
                  <PushButton>Reload</PushButton>
                  <ActionIcons>
                    <ToolButton aria-label="Help"><Icon name="help" /></ToolButton>
                    <ToolButton aria-label="Settings"><Icon name="gear" /></ToolButton>
                  </ActionIcons>
                </Actions>
                <Form>
                  <FormRow $top={8} $cols="159px 1fr">
                    <Label htmlFor="ptype">Power Type</Label>
                    <SelectBox>
                      <Select id="ptype" defaultValue="Total">
                        <option>Total</option>
                      </Select>
                      <Tri />
                    </SelectBox>
                  </FormRow>
                  <FormRow $top={10} $cols="132px 1fr">
                    <Label htmlFor="gdim">Grid dimension:</Label>
                    <Spin id="gdim" w={186} value="7 std cell heights" />
                  </FormRow>
                  <FormRow>
                    <span>Grid size:</span>
                    <span>139 x 103</span>
                  </FormRow>
                  <FormRow>
                    <Choice><Check defaultChecked />Solid filled grids</Choice>
                  </FormRow>
                  <FormRow $flush $top={4} $cols="179px 1fr">
                    <Label htmlFor="bins">Bins:</Label>
                    <Spin id="bins" w={84} value="5" />
                  </FormRow>
                  <FormRow $flush $cols="53px 97px 29px 1fr">
                    <Label htmlFor="from">From:</Label>
                    <Field $w={84}><Input id="from" defaultValue="0" /></Field>
                    <Label htmlFor="to">To:</Label>
                    <Field $w={84}><Input id="to" placeholder="186.37..." /></Field>
                  </FormRow>
                  <FormRow $flush $top={4}>
                    <Choice><Check defaultChecked />Text</Choice>
                  </FormRow>
                  <FormRow $flush $top={8} $cols="162px 1fr">
                    <span>Scenario:</span>
                    <span>default</span>
                  </FormRow>
                </Form>
                <Legend>
                  {BINS.map((b) => (
                    <LegendRow key={b.label}>
                      <Check $dark defaultChecked aria-label={b.label} />
                      <Bound>{b.label}</Bound>
                      <Swatch $color={b.color} />
                      <Count>{b.count}</Count>
                      <Track>
                        <Bar $color={b.color} style={{ width: `${(b.count / max) * 100}%` }} />
                      </Track>
                    </LegendRow>
                  ))}
                  <LastBound>0</LastBound>
                </Legend>
              </Panel>
              <TabRail>
                {SIDE_TABS.map((t) => (
                  <SideTab key={t.name} $size={t.size} $active={t.active}>
                    <Icon name={t.icon} />
                    <SideTabText $fade={t.fade} $lead={t.lead}>{t.name}</SideTabText>
                    <CloseButton aria-label={`Close ${t.name}`}><CloseMark /></CloseButton>
                  </SideTab>
                ))}
              </TabRail>
            </Side>
          </WorkRow>

          <Dock>
            <DockUp aria-label="Raise">
              <Svg width="10" height="9" viewBox="0 0 10 9"><path d="M5 0L10 9H0Z" fill={C.violet} /></Svg>
            </DockUp>
            {[["Console", "console", true], ["Script Editor", "script"], ["Query", "info"]].map(([name, icon, active]) => (
              <DockTab key={name} $active={active}>
                <DockName><Icon name={icon} />{name}</DockName>
                <CloseButton aria-label={`Close ${name}`}><CloseMark /></CloseButton>
              </DockTab>
            ))}
          </Dock>
        </Work>
      </Body>
    </Shell>
  );
}
